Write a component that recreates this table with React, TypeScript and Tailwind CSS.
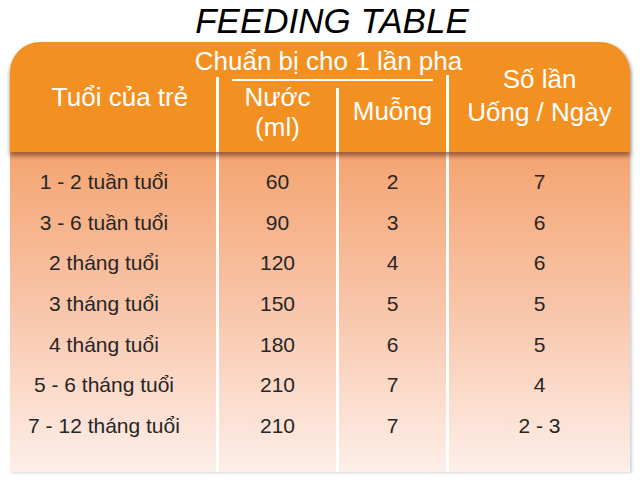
const rows = [
  { age: "1 - 2 tuần tuổi", water: "60", spoon: "2", times: "7" },
  { age: "3 - 6 tuần tuổi", water: "90", spoon: "3", times: "6" },
  { age: "2 tháng tuổi", water: "120", spoon: "4", times: "6" },
  { age: "3 tháng tuổi", water: "150", spoon: "5", times: "5" },
  { age: "4 tháng tuổi", water: "180", spoon: "6", times: "5" },
  { age: "5 - 6 tháng tuổi", water: "210", spoon: "7", times: "4" },
  { age: "7 - 12 tháng tuổi", water: "210", spoon: "7", times: "2 - 3" },
];

const columns: { key: keyof (typeof rows)[number]; width: string }[] = [
  { key: "age", width: "w-[206px] pr-[18px]" },
  { key: "water", width: "w-[117px]" },
  { key: "spoon", width: "w-[107px]" },
  { key: "times", width: "flex-1" },
];

export default function App() {
  return (
    <div className="w-[640px] h-[480px] bg-white font-['Liberation_Sans',Arial,sans-serif] overflow-hidden">
      <h1 className="h-[42px] pl-[24px] text-center text-[35px] leading-[42px] italic text-black">
        FEEDING TABLE
      </h1>

      <div className="mx-[10px] w-[620px] shadow-[2px_1px_3px_rgba(60,80,110,0.25)] rounded-t-[30px]">
        {/* header */}
        <div className="relative z-10 flex h-[110px] items-end rounded-t-[30px] bg-[#f39022] text-white shadow-[0_4px_4px_rgba(100,50,20,0.6)]">
          <div className="flex w-[206px] self-stretch items-center justify-center pl-[14px] text-[26px]">
            Tuổi của trẻ
          </div>
          <div className="h-[75px] w-[3px] bg-white" />

          <div className="flex w-[227px] self-stretch flex-col">
            <div className="mt-[4px] -ml-[34px] -mr-[26px] text-center text-[26px] leading-[30px] whitespace-nowrap">
              Chuẩn bị cho 1 lần pha
            </div>
            <div className="mx-[13px] mt-[3px] h-[2px] bg-white" />
            <div className="flex flex-1 items-end">
              <div className="flex w-[117px] self-stretch items-center justify-center pb-[10px] text-center text-[26px] leading-[30px]">
                Nước
                <br />
                (ml)
              </div>
              <div className="h-[64px] w-[3px] bg-white" />
              <div className="flex w-[107px] self-stretch items-center justify-center pb-[10px] text-[26px]">
                Muỗng
              </div>
            </div>
          </div>

          <div className="h-[77px] w-[3px] bg-white" />
          <div className="flex flex-1 self-stretch items-center justify-center pb-[2px] text-center text-[26px] leading-[33px]">
            Số lần
            <br />
            Uống / Ngày
          </div>
        </div>

        {/* body */}
        <div className="flex gap-[3px] bg-white">
          {columns.map((col) => (
            <div
              key={col.key}
              className={`${col.width} bg-gradient-to-b from-[#f4a470] via-[#f8c6ab] to-[#fdefe9] pt-[10px] pb-[25px]`}
            >
              {rows.map((r, i) => (
                <div
                  key={i}
                  className="h-[40.67px] text-center text-[21px] leading-[40.67px] text-[#262626] whitespace-nowrap"
                >
                  {r[col.key]}
                </div>
              ))}
            </div>
          ))}
        </div>
      </div>
    </div>
  );
}
